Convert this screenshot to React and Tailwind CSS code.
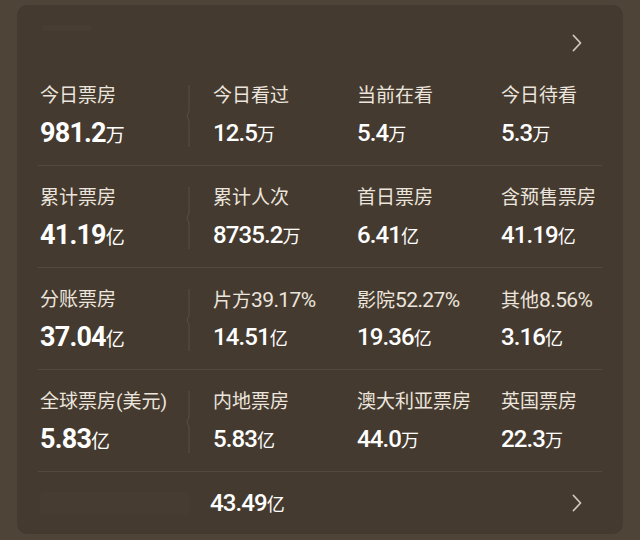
import React from "react";

const rows = [
  {
    main: { label: "今日票房", num: "981.2", unit: "万" },
    cells: [
      { label: "今日看过", num: "12.5", unit: "万" },
      { label: "当前在看", num: "5.4", unit: "万" },
      { label: "今日待看", num: "5.3", unit: "万" },
    ],
  },
  {
    main: { label: "累计票房", num: "41.19", unit: "亿" },
    cells: [
      { label: "累计人次", num: "8735.2", unit: "万" },
      { label: "首日票房", num: "6.41", unit: "亿" },
      { label: "含预售票房", num: "41.19", unit: "亿" },
    ],
  },
  {
    main: { label: "分账票房", num: "37.04", unit: "亿" },
    cells: [
      { label: "片方", pct: "39.17%", num: "14.51", unit: "亿" },
      { label: "影院", pct: "52.27%", num: "19.36", unit: "亿" },
      { label: "其他", pct: "8.56%", num: "3.16", unit: "亿" },
    ],
  },
  {
    main: { label: "全球票房(美元)", num: "5.83", unit: "亿" },
    cells: [
      { label: "内地票房", num: "5.83", unit: "亿" },
      { label: "澳大利亚票房", num: "44.0", unit: "万" },
      { label: "英国票房", num: "22.3", unit: "万" },
    ],
  },
];

const Chevron = () => (
  <svg width="10" height="18" viewBox="0 0 10 18" fill="none">
    <path
      d="M1.5 1.5 L8.5 9 L1.5 16.5"
      stroke="#cfc7bc"
      strokeWidth="1.8"
      strokeLinecap="round"
      strokeLinejoin="round"
    />
  </svg>
);

const Divider = () => (
  <svg width="6" height="62" viewBox="0 0 6 62" fill="none" className="mx-[-2px]">
    <path d="M3 0 V26 L1 31 L3 36 V62" stroke="#5a4f43" strokeWidth="1" />
  </svg>
);

const App = () => {
  return (
    <div
      className="w-[640px] h-[540px] bg-[#4e4437] pt-[5px] px-[17px] pb-[6px]"
      style={{ fontFamily: '"Roboto", "Noto Sans CJK SC", sans-serif' }}
    >
      <div className="h-full bg-[#453a2f] rounded-[10px] px-[21px] flex flex-col">
        {/* header */}
        <div className="h-[59px] flex items-center justify-between pt-[17px] pr-[20px]">
          <div className="ml-[4px] mt-[-30px] w-[50px] h-[6px] rounded bg-[#483d32]" />
          <Chevron />
        </div>

        {rows.map((row, i) => (
          <div
            key={i}
            className="border-b border-[#54493d] pt-[20px] pb-[17px] pl-[2px] flex items-stretch"
          >
            <div className="w-[148px] flex flex-col">
              <div className="h-[24px] leading-[24px] text-[19px] text-[#ebe5dd] whitespace-nowrap">
                {row.main.label}
              </div>
              <div className="mt-[10px] h-[30px] leading-[30px] text-white whitespace-nowrap">
                <span className="text-[27px] font-bold tracking-[-0.8px]">{row.main.num}</span>
                <span className="text-[19px]">{row.main.unit}</span>
              </div>
            </div>
            <div className="flex items-center">
              <Divider />
            </div>
            <div className="w-[23px]" />
            {row.cells.map((c, j) => (
              <div key={j} className={j === 2 ? "flex-1 flex flex-col" : "w-[144px] flex flex-col"}>
                <div className="h-[24px] leading-[24px] text-[19px] text-[#ebe5dd] whitespace-nowrap">
                  {c.label}
                  {c.pct && <span className="text-[21px] tracking-[-0.6px]">{c.pct}</span>}
                </div>
                <div className="mt-[10px] h-[30px] leading-[30px] text-white whitespace-nowrap">
                  <span className="text-[24px] font-medium tracking-[-0.9px]">{c.num}</span>
                  <span className="text-[18px]">{c.unit}</span>
                </div>
              </div>
            ))}
          </div>
        ))}

        {/* bottom row */}
        <div className="flex-1 flex items-center pr-[20px]">
          <div className="w-[150px] h-[22px] rounded bg-[#473c31] ml-[2px]" />
          <div className="w-[20px]" />
          <div className="text-white whitespace-nowrap flex-1">
            <span className="text-[24px] font-medium tracking-[-0.9px]">43.49</span>
            <span className="text-[18px]">亿</span>
          </div>
          <Chevron />
        </div>
      </div>
    </div>
  );
};

export default App;
